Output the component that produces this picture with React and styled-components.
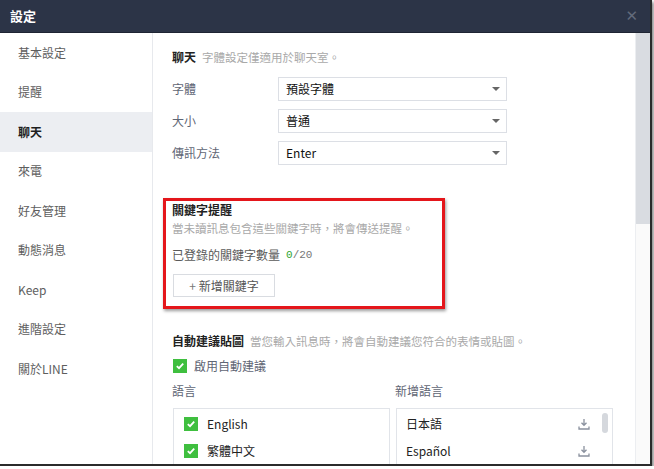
import React from "react";
import styled, { createGlobalStyle } from "styled-components";

const Global = createGlobalStyle`
  html, body {
    margin: 0;
    padding: 0;
    background: #ffffff;
    font-family: "Noto Sans CJK TC", "Noto Sans", "Liberation Sans", sans-serif;
    font-size: 12px;
    line-height: 16px;
    color: #333;
  }
`;

const Window = styled.div`
  width: 650px;
  height: 464px;
  display: flex;
  flex-direction: column;
  overflow: hidden;
  border-right: 2px solid #2b2b2b;
  border-bottom: 2px solid #2b2b2b;
  box-shadow: 2px 2px 3px rgba(0, 0, 0, 0.45);
  background: #fff;
`;

const TitleBar = styled.div`
  height: 32px;
  flex: none;
  background: #2c3447;
  border-bottom: 1px solid #1f2533;
  display: flex;
  align-items: center;
  justify-content: space-between;
  padding: 0 12px 0 10px;
  color: #fff;
  font-size: 13px;
  font-weight: bold;
`;

const Close = styled.span`
  color: #626a7b;
  font-size: 15px;
  font-weight: normal;
  font-family: "DejaVu Sans", sans-serif;
`;

const Body = styled.div`
  flex: 1;
  display: flex;
  min-height: 0;
`;

const Sidebar = styled.nav`
  width: 152px;
  flex: none;
  border-right: 1px solid #e7e9ed;
`;

const NavItem = styled.div`
  height: 39.5px;
  display: flex;
  align-items: center;
  padding-left: 18px;
  font-size: 12px;
  color: ${(p) => (p.$active ? "#1e1e1e" : "#5e5e5e")};
  font-weight: ${(p) => (p.$active ? "bold" : "normal")};
  background: ${(p) => (p.$active ? "#eceef2" : "transparent")};
`;

const Content = styled.main`
  flex: 1;
  padding: 16px 0 0 19px;
  overflow: hidden;
`;

const Heading = styled.div`
  display: flex;
  align-items: baseline;
  gap: 6px;
  b {
    color: #222;
    font-size: 12px;
  }
  span {
    color: #a9a9a9;
    font-size: 11.5px;
  }
`;

const FormRows = styled.div`
  display: flex;
  flex-direction: column;
  gap: 8px;
  margin-top: 12px;
`;

const Row = styled.div`
  display: flex;
  align-items: center;
`;

const Label = styled.div`
  width: 106px;
  color: #5f6675;
  font-size: 12px;
`;

const Select = styled.div`
  width: 229px;
  height: 24px;
  box-sizing: border-box;
  border: 1px solid #dcdfe5;
  display: flex;
  align-items: center;
  justify-content: space-between;
  padding: 0 6px 1px 7px;
  color: #111;
  font-size: 12px;
`;

const Caret = styled.span`
  width: 0;
  height: 0;
  border-left: 4px solid transparent;
  border-right: 4px solid transparent;
  border-top: 4px solid #666;
`;

const Highlight = styled.section`
  width: 282px;
  box-sizing: border-box;
  margin: 33px 0 0 -9px;
  border: 3px solid #e4161b;
  box-shadow: 1px 2px 3px rgba(0, 0, 0, 0.4);
  padding: 1px 6px 9px 6px;
`;

const Desc = styled.div`
  color: #a9a9a9;
  font-size: 11.5px;
  margin-top: 2px;
`;

const Count = styled.div`
  margin-top: 11px;
  color: #5a5a5a;
  font-size: 12px;
  display: flex;
  align-items: center;
  gap: 6px;
`;

const Mono = styled.span`
  font-family: "Liberation Mono", monospace;
  font-size: 11px;
  color: #777;
  em {
    font-style: normal;
    color: #2ea52e;
  }
`;

const AddButton = styled.div`
  margin-top: 11px;
  width: 102px;
  height: 23px;
  box-sizing: border-box;
  border: 1px solid #d9dce1;
  display: flex;
  align-items: center;
  justify-content: center;
  gap: 3px;
  color: #555;
  font-size: 12px;
  margin-left: 1px;
`;

const Plus = styled.span`
  color: #777;
`;

const Section = styled.section`
  margin-top: 24px;
`;

const Check = styled.span`
  width: 14px;
  height: 14px;
  flex: none;
  background: #3fbf3f;
  display: inline-flex;
  align-items: center;
  justify-content: center;
`;

const CheckRow = styled.div`
  display: flex;
  align-items: center;
  gap: 7px;
  margin-top: 9px;
  margin-left: 1px;
  color: #5f6675;
  font-size: 12px;
`;

const Columns = styled.div`
  display: grid;
  grid-template-columns: 217px 217px;
  column-gap: 6px;
  margin-top: 9px;
  margin-left: 1px;
`;

const ColTitle = styled.div`
  color: #5f6675;
  font-size: 12px;
  margin-left: -1px;
`;

const ListBox = styled.div`
  margin-top: 9px;
  height: 70px;
  box-sizing: border-box;
  border: 1px solid #e1e4e9;
  padding-top: 1px;
  position: relative;
`;

const ListRow = styled.div`
  height: 27px;
  display: flex;
  align-items: center;
  gap: 9px;
  padding: 0 22px 0 ${(p) => p.$pad}px;
  justify-content: ${(p) => (p.$spread ? "space-between" : "flex-start")};
  color: #222;
  font-size: 12px;
`;

const Thumb = styled.div`
  position: absolute;
  right: 4px;
  top: 4px;
  width: 6px;
  height: 20px;
  border-radius: 3px;
  background: #d5d8dd;
`;

const ScrollTrack = styled.div`
  width: 14px;
  flex: none;
  background: #fafafa;
  border-left: 1px solid #eceef1;
`;

const ScrollThumb = styled.div`
  height: 191px;
  background: #d9dce1;
`;

const Tick = () => (
  <svg width="10" height="10" viewBox="0 0 10 10">
    <path d="M1.8 5.2 L4 7.2 L8.2 2.6" stroke="#fff" strokeWidth="1.8" fill="none" />
  </svg>
);

const Download = () => (
  <svg width="12" height="12" viewBox="0 0 12 12">
    <path d="M6 1 V7 M3.5 4.8 L6 7.3 L8.5 4.8" stroke="#8a919e" strokeWidth="1.3" fill="none" />
    <path d="M1 8.5 V11 H11 V8.5" stroke="#8a919e" strokeWidth="1.3" fill="none" />
  </svg>
);

const nav = ["基本設定", "提醒", "聊天", "來電", "好友管理", "動態消息", "Keep", "進階設定", "關於LINE"];

const selects = [
  ["字體", "預設字體"],
  ["大小", "普通"],
  ["傳訊方法", "Enter"],
];

export default function App() {
  return (
    <>
      <Global />
      <Window>
        <TitleBar>
          設定
          <Close>✕</Close>
        </TitleBar>
        <Body>
          <Sidebar>
            {nav.map((n) => (
              <NavItem key={n} $active={n === "聊天"}>
                {n}
              </NavItem>
            ))}
          </Sidebar>
          <Content>
            <Heading>
              <b>聊天</b>
              <span>字體設定僅適用於聊天室。</span>
            </Heading>
            <FormRows>
              {selects.map(([l, v]) => (
                <Row key={l}>
                  <Label>{l}</Label>
                  <Select>
                    {v}
                    <Caret />
                  </Select>
                </Row>
              ))}
            </FormRows>

            <Highlight>
              <Heading>
                <b>關鍵字提醒</b>
              </Heading>
              <Desc>當未讀訊息包含這些關鍵字時，將會傳送提醒。</Desc>
              <Count>
                已登錄的關鍵字數量
                <Mono>
                  <em>0</em>/20
                </Mono>
              </Count>
              <AddButton>
                <Plus>+</Plus> 新增關鍵字
              </AddButton>
            </Highlight>

            <Section>
              <Heading>
                <b>自動建議貼圖</b>
                <span>當您輸入訊息時，將會自動建議您符合的表情或貼圖。</span>
              </Heading>
              <CheckRow>
                <Check>
                  <Tick />
                </Check>
                啟用自動建議
              </CheckRow>
              <Columns>
                <ColTitle>語言</ColTitle>
                <ColTitle>新增語言</ColTitle>
                <ListBox>
                  <ListRow $pad={10}>
                    <Check>
                      <Tick />
                    </Check>
                    English
                  </ListRow>
                  <ListRow $pad={10}>
                    <Check>
                      <Tick />
                    </Check>
                    繁體中文
                  </ListRow>
                </ListBox>
                <ListBox>
                  <ListRow $pad={9} $spread>
                    日本語
                    <Download />
                  </ListRow>
                  <ListRow $pad={9} $spread>
                    Español
                    <Download />
                  </ListRow>
                  <Thumb />
                </ListBox>
              </Columns>
            </Section>
          </Content>
          <ScrollTrack>
            <ScrollThumb />
          </ScrollTrack>
        </Body>
      </Window>
    </>
  );
}
